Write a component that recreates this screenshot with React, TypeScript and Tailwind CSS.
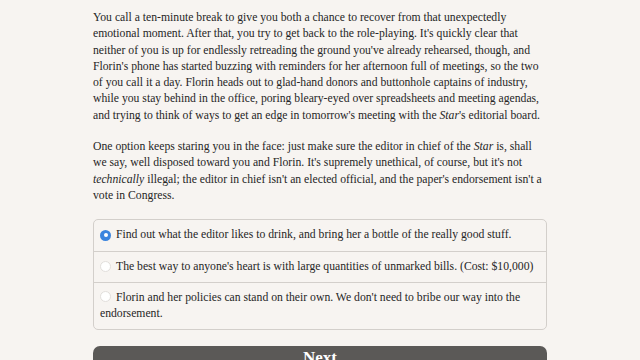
import React from "react";

export default function App() {
  const serif = { fontFamily: '"Liberation Serif", "Times New Roman", serif' };
  return (
    <div className="min-h-[360px] w-full bg-[#f7f4f1] text-[#262626] overflow-hidden" style={serif}>
      <div className="mx-auto w-[454px] pt-[10px] text-[11.7px] leading-[16.3px]">
        <p className="whitespace-nowrap">
          You call a ten-minute break to give you both a chance to recover from that unexpectedly<br />
          emotional moment. After that, you try to get back to the role-playing. It's quickly clear that<br />
          neither of you is up for endlessly retreading the ground you've already rehearsed, though, and<br />
          Florin's phone has started buzzing with reminders for her afternoon full of meetings, so the two<br />
          of you call it a day. Florin heads out to glad-hand donors and buttonhole captains of industry,<br />
          while you stay behind in the office, poring bleary-eyed over spreadsheets and meeting agendas,<br />
          and trying to think of ways to get an edge in tomorrow's meeting with the <i>Star</i>'s editorial board.
        </p>
        <p className="mt-[15px] whitespace-nowrap">
          One option keeps staring you in the face: just make sure the editor in chief of the <i>Star</i> is, shall<br />
          we say, well disposed toward you and Florin. It's supremely unethical, of course, but it's not<br />
          <i>technically</i> illegal; the editor in chief isn't an elected official, and the paper's endorsement isn't a<br />
          vote in Congress.
        </p>
        <div className="mt-[15px] rounded-[5px] border border-[#d3cfcb]">
          <div className="flex items-start px-[6px] py-[7px] border-b border-[#d3cfcb]">
            <span className="mt-[2.5px] mr-[5px] flex h-[11px] w-[11px] shrink-0 items-center justify-center rounded-full bg-[#3a84de]">
              <span className="h-[4px] w-[4px] rounded-full bg-white" />
            </span>
            <span>Find out what the editor likes to drink, and bring her a bottle of the really good stuff.</span>
          </div>
          <div className="flex items-start px-[6px] py-[7px] border-b border-[#d3cfcb]">
            <span className="mt-[2.5px] mr-[5px] h-[11px] w-[11px] shrink-0 rounded-full border border-[#e2dfdc] bg-white" />
            <span>The best way to anyone's heart is with large quantities of unmarked bills. (Cost: $10,000)</span>
          </div>
          <div className="px-[6px] py-[7px] whitespace-nowrap">
            <span className="mr-[5px] inline-block h-[11px] w-[11px] align-[-1px] rounded-full border border-[#e2dfdc] bg-white" />
            Florin and her policies can stand on their own. We don't need to bribe our way into the<br />
            endorsement.
          </div>
        </div>
        <button className="mt-[16px] flex h-[40px] w-full items-start justify-center rounded-[7px] bg-[#5b5957] pt-[4px] text-[17px] font-bold text-white" style={serif}>
          Next
        </button>
      </div>
    </div>
  );
}
